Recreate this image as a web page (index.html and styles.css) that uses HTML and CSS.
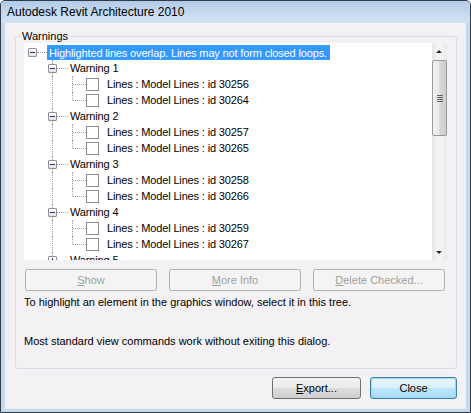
FILE: index.html
```html
<!DOCTYPE html>
<html>
<head>
<meta charset="utf-8">
<link rel="stylesheet" href="styles.css">
</head>
<body>
<div class="window">
  <div class="titlebar"><span class="title">Autodesk Revit Architecture 2010</span></div>
  <div class="client">
    <fieldset class="group">
      <legend>Warnings</legend>
      <div class="tree">
        <div class="tree-body">
          <div class="row root">
            <span class="exp"><i></i></span><span class="hl"></span>
            <span class="label sel">Highlighted lines overlap. Lines may not form closed loops.</span>
          </div>
          <div class="branch">
            <div class="row lvl1"><span class="vline"></span><span class="exp"><i></i></span><span class="hl short"></span><span class="label">Warning 1</span></div>
            <div class="row leaf"><span class="vline"></span><span class="lvline"></span><span class="hl leafl"></span><span class="cb"></span><span class="label">Lines : Model Lines : id 30256</span></div>
            <div class="row leaf last"><span class="vline"></span><span class="lvline"></span><span class="hl leafl"></span><span class="cb"></span><span class="label">Lines : Model Lines : id 30264</span></div>
            <div class="row lvl1"><span class="vline"></span><span class="exp"><i></i></span><span class="hl short"></span><span class="label">Warning 2</span></div>
            <div class="row leaf"><span class="vline"></span><span class="lvline"></span><span class="hl leafl"></span><span class="cb"></span><span class="label">Lines : Model Lines : id 30257</span></div>
            <div class="row leaf last"><span class="vline"></span><span class="lvline"></span><span class="hl leafl"></span><span class="cb"></span><span class="label">Lines : Model Lines : id 30265</span></div>
            <div class="row lvl1"><span class="vline"></span><span class="exp"><i></i></span><span class="hl short"></span><span class="label">Warning 3</span></div>
            <div class="row leaf"><span class="vline"></span><span class="lvline"></span><span class="hl leafl"></span><span class="cb"></span><span class="label">Lines : Model Lines : id 30258</span></div>
            <div class="row leaf last"><span class="vline"></span><span class="lvline"></span><span class="hl leafl"></span><span class="cb"></span><span class="label">Lines : Model Lines : id 30266</span></div>
            <div class="row lvl1"><span class="vline"></span><span class="exp"><i></i></span><span class="hl short"></span><span class="label">Warning 4</span></div>
            <div class="row leaf"><span class="vline"></span><span class="lvline"></span><span class="hl leafl"></span><span class="cb"></span><span class="label">Lines : Model Lines : id 30259</span></div>
            <div class="row leaf last"><span class="vline"></span><span class="lvline"></span><span class="hl leafl"></span><span class="cb"></span><span class="label">Lines : Model Lines : id 30267</span></div>
            <div class="row lvl1"><span class="vline"></span><span class="exp plus"><i></i><b></b></span><span class="hl short"></span><span class="label">Warning 5</span></div>
          </div>
        </div>
        <div class="scrollbar">
          <div class="arrow up"></div>
          <div class="thumb"><span class="grip"></span></div>
          <div class="track"></div>
          <div class="arrow down"></div>
        </div>
      </div>
      <div class="btnrow">
        <button class="btn disabled"><u>S</u>how</button>
        <button class="btn disabled"><u>M</u>ore Info</button>
        <button class="btn disabled"><u>D</u>elete Checked...</button>
      </div>
      <p class="info">To highlight an element in the graphics window, select it in this tree.<br><br><br>Most standard view commands work without exiting this dialog.</p>
    </fieldset>
    <div class="footer">
      <button class="btn normal"><u>E</u>xport...</button>
      <button class="btn normal default">Close</button>
    </div>
  </div>
</div>
</body>
</html>
```

FILE: styles.css
```css
html, body {
  margin: 0;
  padding: 0;
  background: #ffffff;
}
.window {
  width: 469px;
  height: 411px;
  border: 1px solid #2f3b47;
  border-radius: 5px 5px 0 0;
  background: #c4d9ee;
  display: flex;
  flex-direction: column;
  overflow: hidden;
  font-family: "Liberation Sans", Arial, sans-serif;
  font-size: 11px;
  color: #000;
}
.titlebar {
  height: 22px;
  flex: none;
  background: linear-gradient(to bottom, #b3cbe7 0%, #c4d8ee 50%, #d3e3f3 100%);
  display: flex;
  align-items: center;
  padding-left: 6px;
}
.title {
  font-family: "Liberation Sans", Arial, sans-serif;
  font-size: 12px;
  color: #000;
}
.client {
  flex: 1;
  margin: 0 4px 3px 4px;
  background: #f4f1f4;
  border: 1px solid #eaf0f7;
  border-top: none;
  display: flex;
  flex-direction: column;
}
.group {
  margin: 7px 8px 0 9px;
  padding: 0 9px 20px 8px;
  border: 1px solid #d5dfe5;
  border-radius: 3px;
  min-width: 0;
}
.group legend {
  padding: 0 2px;
  margin-left: -4px;
  line-height: 13px;
  height: 13px;
  font-size: 11px;
}
.tree {
  height: 217px;
  background: #fff;
  display: flex;
  overflow: hidden;
}
.tree-body {
  flex: 1;
  padding-top: 1px;
  overflow: hidden;
  letter-spacing: -0.15px;
}
.row {
  height: 16px;
  position: relative;
  display: flex;
  align-items: center;
  white-space: nowrap;
}
.exp {
  width: 7px;
  height: 7px;
  border: 1px solid #919191;
  background: linear-gradient(to bottom, #ffffff, #e2e2e2);
  position: relative;
  flex: none;
  border-radius: 1px;
}
.exp i {
  position: absolute;
  left: 1px;
  top: 3px;
  width: 5px;
  height: 1px;
  background: #1f3a8a;
}
.exp b {
  position: absolute;
  left: 3px;
  top: 1px;
  width: 1px;
  height: 5px;
  background: #1f3a8a;
}
.hl {
  width: 10px;
  height: 0;
  border-top: 1px dotted #a0a0a0;
  flex: none;
}
.root {
  padding-left: 4px;
}
.label {
  padding: 0 2px;
  line-height: 14px;
}
.label.sel {
  background: #3399ff;
  color: #fff;
  outline: 1px dotted #c88a3a;
  outline-offset: -1px;
  padding: 1px 3px 0 2px;
}
.lvl1 {
  padding-left: 24px;
}
.lvl1 .hl.short {
  width: 11px;
}
.vline {
  position: absolute;
  left: 28px;
  top: 0;
  bottom: 0;
  border-left: 1px dotted #a0a0a0;
}
.leaf {
  padding-left: 48px;
}
.lvline {
  position: absolute;
  left: 48px;
  top: 0;
  bottom: 0;
  border-left: 1px dotted #a0a0a0;
}
.leaf.last .lvline {
  bottom: 8px;
}
.hl.leafl {
  width: 13px;
  margin-left: 1px;
}
.cb {
  width: 11px;
  height: 11px;
  border: 1px solid #8e8f8f;
  background: #fff;
  flex: none;
  margin-right: 8px;
}
.leaf .label {
  padding-left: 0;
}
.scrollbar {
  width: 15px;
  flex: none;
  display: flex;
  flex-direction: column;
  background: linear-gradient(to right, #e6e6e6, #f4f4f4 40%, #f4f4f4 60%, #e9e9e9);
}
.arrow {
  height: 17px;
  flex: none;
  position: relative;
}
.arrow.up::after, .arrow.down::after {
  content: "";
  position: absolute;
  left: 4px;
  width: 0;
  height: 0;
  border-left: 3px solid transparent;
  border-right: 3px solid transparent;
}
.arrow.up::after {
  top: 7px;
  border-bottom: 3px solid #2a2a2a;
}
.arrow.down::after {
  top: 8px;
  border-top: 3px solid #2a2a2a;
}
.thumb {
  height: 76px;
  flex: none;
  border: 1px solid #9a9a9a;
  border-radius: 2px;
  background: linear-gradient(to right, #f2f2f2, #e9e9e9 45%, #d6d6d6 55%, #cfcfcf);
  display: flex;
  align-items: center;
  justify-content: center;
  box-sizing: border-box;
}
.grip {
  width: 6px;
  height: 7px;
  background: repeating-linear-gradient(to bottom, #5e5e5e 0, #5e5e5e 1px, transparent 1px, transparent 2px);
}
.track {
  flex: 1;
}
.btnrow {
  display: flex;
  gap: 12px;
  margin: 9px 0 0 1px;
}
.btn {
  font-family: "Liberation Sans", Arial, sans-serif;
  font-size: 11px;
  height: 22px;
  padding: 0;
  border-radius: 3px;
  box-sizing: border-box;
}
.btn.disabled {
  width: 132px;
  border: 1px solid #adb2b5;
  background: #f4f4f4;
  color: #a0a0a0;
}
.info {
  margin: 5px 0 0 0;
  line-height: 13px;
}
.footer {
  display: flex;
  justify-content: flex-end;
  gap: 9px;
  margin: 8px 8px 0 0;
}
.btn.normal {
  width: 89px;
  height: 22px;
  border: 1px solid #707070;
  background: linear-gradient(to bottom, #f2f2f2 0%, #ebebeb 50%, #dddddd 51%, #cfcfcf 100%);
  color: #000;
}
.btn.default {
  width: 87px;
  border-color: #3c7fb1;
  background: linear-gradient(to bottom, #eaf6fd 0%, #d9f0fc 50%, #bee6fd 51%, #a7d9f5 100%);
  box-shadow: inset 0 0 0 1px #9ed8f5;
}
```
